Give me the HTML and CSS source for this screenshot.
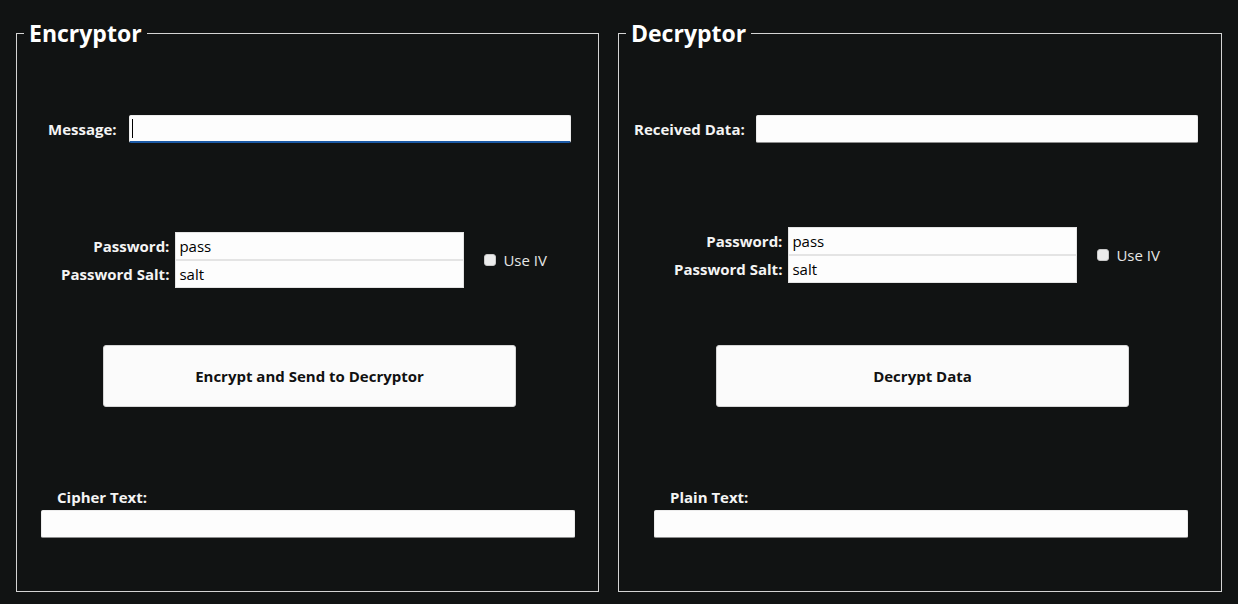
FILE: index.html
```html
<!DOCTYPE html>
<html lang="en">
<head>
<meta charset="utf-8">
<title>Encryptor / Decryptor</title>
<link rel="stylesheet" href="styles.css">
</head>
<body>
<main class="app">
  <fieldset class="panel panel-enc">
    <legend class="panel-title">Encryptor</legend>
    <div class="panel-body">
      <div class="row row-message">
        <label class="lbl">Message:</label>
        <div class="field field-focus"><span class="caret"></span></div>
      </div>
      <div class="pw-block">
        <div class="pw-grid">
          <label class="lbl lbl-right">Password:</label>
          <div class="field field-pw">pass</div>
          <label class="lbl lbl-right">Password Salt:</label>
          <div class="field field-pw">salt</div>
        </div>
        <div class="check"><span class="box"></span><span class="check-text">Use IV</span></div>
      </div>
      <div class="btn-row"><button class="btn">Encrypt and Send to Decryptor</button></div>
      <div class="out">
        <label class="lbl out-label">Cipher Text:</label>
        <div class="field field-out"></div>
      </div>
    </div>
  </fieldset>
  <fieldset class="panel panel-dec">
    <legend class="panel-title">Decryptor</legend>
    <div class="panel-body">
      <div class="row row-message">
        <label class="lbl">Received Data:</label>
        <div class="field"></div>
      </div>
      <div class="pw-block">
        <div class="pw-grid">
          <label class="lbl lbl-right">Password:</label>
          <div class="field field-pw">pass</div>
          <label class="lbl lbl-right">Password Salt:</label>
          <div class="field field-pw">salt</div>
        </div>
        <div class="check"><span class="box"></span><span class="check-text">Use IV</span></div>
      </div>
      <div class="btn-row"><button class="btn">Decrypt Data</button></div>
      <div class="out">
        <label class="lbl out-label">Plain Text:</label>
        <div class="field field-out"></div>
      </div>
    </div>
  </fieldset>
</main>
</body>
</html>
```
FILE: styles.css
```css
* { box-sizing: border-box; }
html, body { margin: 0; height: 100%; }
body {
  background: #111313;
  font-family: "Open Sans", "Noto Sans", sans-serif;
  color: #f2f2f2;
  overflow: hidden;
}
.app {
  display: flex;
  gap: 19px;
  padding: 18px 0 0 16px;
}
.panel {
  margin: 0;
  padding: 0;
  border: 1px solid #d4d4d4;
  height: 574px;
  min-width: 0;
}
.panel-enc { width: 583px; }
.panel-dec { width: 604px; }
.panel-title {
  margin-left: 7px;
  padding: 0 5px;
  font-size: 23px;
  font-weight: 700;
  line-height: 30px;
  color: #ffffff;
}
.panel-body {
  display: flex;
  flex-direction: column;
}
.lbl {
  font-size: 15px;
  font-weight: 700;
  color: #f4f4f4;
  white-space: nowrap;
  line-height: 20px;
}
.field {
  background: #fdfdfd;
  border: 1px solid #ececec;
  border-bottom-color: #8d8d8d;
  border-radius: 2px;
  height: 28px;
  color: #000;
  font-size: 15px;
  padding: 0 3px;
  display: flex;
  align-items: center;
}
.row {
  display: flex;
  align-items: center;
  margin-top: 67px;
}
.row .field { flex: 0 0 auto; }
.panel-enc .row-message { padding-left: 31px; gap: 12px; }
.panel-enc .row-message .field { width: 442px; }
.panel-dec .row-message { padding-left: 15px; gap: 11px; }
.panel-dec .row-message .field { width: 442px; }
.field-focus { border-bottom: 2px solid #1c5aa6; }
.caret {
  display: block;
  width: 1px;
  height: 19px;
  background: #000;
  margin-left: -1px;
}
.pw-block {
  display: flex;
  align-items: center;
}
.panel-enc .pw-block { margin-top: 89px; padding-left: 44px; }
.panel-dec .pw-block { margin-top: 84px; padding-left: 55px; }
.pw-grid {
  display: grid;
  grid-template-columns: auto 289px;
  column-gap: 6px;
  align-items: center;
}
.lbl-right { text-align: right; }
.field-pw {
  height: 28px;
  border-radius: 0;
  border-color: #e4e4e4;
  padding-left: 3px;
}
.check {
  display: flex;
  align-items: center;
  gap: 7px;
  margin-left: 20px;
  font-size: 15px;
  color: #e6e6e6;
}
.box {
  width: 12px;
  height: 12px;
  border-radius: 3px;
  background: #ececec;
  border: 1px solid #c8c8c8;
}
.btn-row { display: flex; }
.panel-enc .btn-row { margin-top: 57px; padding-left: 86px; }
.panel-dec .btn-row { margin-top: 62px; padding-left: 97px; }
.btn {
  width: 413px;
  height: 62px;
  background: #fbfbfb;
  border: 1px solid #d6d6d6;
  border-radius: 3px;
  font-family: inherit;
  font-size: 15px;
  font-weight: 700;
  color: #111;
}
.out {
  display: flex;
  flex-direction: column;
  margin-top: 80px;
}
.out-label { margin-bottom: 3px; }
.panel-enc .out { padding-left: 24px; }
.panel-enc .out-label { padding-left: 16px; }
.panel-dec .out { padding-left: 35px; }
.panel-dec .out-label { padding-left: 16px; }
.field-out { width: 534px; }
```
